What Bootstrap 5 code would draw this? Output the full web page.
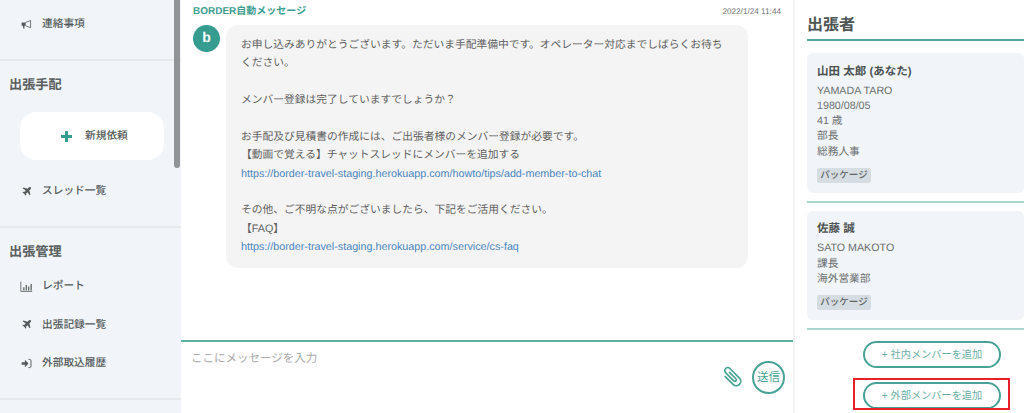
<!DOCTYPE html>
<html lang="ja">
<head>
<meta charset="utf-8">
<title>BORDER</title>
<link href="https://cdn.jsdelivr.net/npm/bootstrap@5.3.0/dist/css/bootstrap.min.css" rel="stylesheet">
<style>
html,body{height:413px;overflow:hidden}
body{font-family:"Liberation Sans","Noto Sans CJK JP",sans-serif;color:#555;background:#fff;font-size:10.7px;text-rendering:geometricPrecision}
.shell{height:413px;width:1024px}
.side{width:181px;flex:none;background:#f1f5f9;position:relative;overflow:hidden}
.thumb{position:absolute;right:1px;top:0;width:6px;height:168px;background:#8f9496;border-radius:0 0 3px 3px}
.sec-a{height:61px;padding-top:5px}
.sec-b{height:167px;padding-top:14px}
.sec-c{height:172px;padding-top:14px}
.side-sec{border-bottom:2px solid #e6eaed}
.side-head{font-size:13.2px;font-weight:700;color:#5a5f5f;margin:0;padding-left:9px;line-height:20px}
.head-gap{margin-bottom:5px}
.side-item{display:flex;align-items:center;height:38.5px;padding-left:20px;color:#555b5b;font-weight:500;font-size:10.7px;text-decoration:none}
.side-item svg{width:13px;height:13px;margin-right:9px;flex:none}
.new-btn{width:144px;height:48px;margin:17px 0 12px 20px;background:#fff;border-radius:16px;display:flex;align-items:center;padding-left:41px;font-size:10.7px;color:#555b5b;font-weight:500;gap:13px}
.chat{width:614px;flex:none;border-right:2px solid #f0f2f4}
.msgs{height:340px;padding:5px 12px 0 12px;flex:none}
.sender{font-size:10px;font-weight:700;color:#3f9e92;line-height:13px}
.stamp{font-size:8.2px;color:#777;line-height:13px}
.msg-row{margin-top:7px}
.avatar{width:27px;height:27px;border-radius:50%;background:#369c90;color:#fff;font-weight:700;font-size:14px;line-height:25px;text-align:center;flex:none}
.bubble{width:522px;height:243px;margin-left:6px;background:#f4f4f4;border-radius:12px;padding:11px 20px 0 15px;font-size:10.76px;line-height:18.36px;color:#5f5f5f;white-space:pre-line}
.bubble a{color:#4a86c0;text-decoration:none}
.composer{border-top:2px solid #5bb0a3;flex:1;padding:9px 10px 0 10px;position:relative}
.hint{font-size:11.5px;color:#a9a9a9;line-height:16px}
.tools{position:absolute;right:8px;top:19px;display:flex;align-items:center;gap:9px}
.send{width:33px;height:33px;border-radius:50%;border:2px solid #48a396;color:#48a396;background:#fff;font-size:11.5px;padding:0;line-height:1;white-space:nowrap}
.right{flex:1;padding:16px 0 0 12px;min-width:0}
.right-title{font-size:16px;font-weight:700;color:#4d5555;line-height:20px;margin:0;padding-bottom:2.5px;border-bottom:2px solid #4fa99c}
.person{background:#f1f5f9;border-radius:6px;padding:8.500px 10px 9.500px;margin:8px 0;line-height:15.3px;color:#6b6f70;font-size:10.7px}
.first{margin-top:12.500px}
.person b{display:block;color:#4d5353;line-height:20px;margin-bottom:2px;font-size:11.5px}
.tag{display:block;width:54px;text-align:center;background:#d6dde2;color:#5d6466;font-size:9.5px;font-weight:500;line-height:15px;border-radius:2px;margin-top:8.300px}
.rule{height:2px;background:#a9d6cf}
.add{display:block;width:138px;height:27px;border:2px solid #48a396;border-radius:14px;background:#fff;color:#6cb0a6;font-size:10.2px;line-height:1;padding:0}
.actions{padding:11.500px 0 0 56px;display:flex;flex-direction:column;gap:14px}
.mark-wrap{position:relative;width:138px}
.mark-box{position:absolute;left:-10px;top:-4px;width:157px;height:32px;border:2px solid #e8202a;pointer-events:none}
</style>
</head>
<body>
<div class="shell d-flex">
  <nav class="side">
    <div class="thumb"></div>
    <div class="side-sec sec-a">
      <a class="side-item" href="#"><svg viewBox="0 0 16 16"><path d="M2 5.500h5v4H5.500V13H4L3.500 9.500H2z" fill="#555b5b"/><path d="M7 5.500 13 3v9L7 9.500" fill="none" stroke="#555b5b"/></svg>連絡事項</a>
    </div>
    <div class="side-sec sec-b">
      <h2 class="side-head">出張手配</h2>
      <div class="new-btn"><svg width="11" height="11" viewBox="0 0 11 11"><path d="M4 0h3v4h4v3H7v4H4V7H0V4h4z" fill="#369c90"/></svg><span>新規依頼</span></div>
      <a class="side-item" href="#"><svg viewBox="0 0 16 16"><path d="M13.200 2.800c-.7-.7-1.800-.4-2.500.3L9.300 4.500 4.200 3.200 3.300 4.100 7 6.800 5.200 8.600 3.600 8.300 2.900 9 5.200 10.800 7 13.100 7.700 12.400 7.400 10.800 9.200 9 11.900 12.700 12.800 11.800 11.500 6.700 12.900 5.300C13.600 4.600 13.900 3.500 13.200 2.800z" fill="#555b5b"/></svg>スレッド一覧</a>
    </div>
    <div class="side-sec sec-c">
      <h2 class="side-head head-gap">出張管理</h2>
      <a class="side-item" href="#"><svg viewBox="0 0 16 16"><path d="M1 2v12h14" fill="none" stroke="#555b5b"/><path d="M4 9h1.500v4H4zM7 6h1.500v7H7zM10 8h1.500v5H10zM13 5h1.500v8H13z" fill="#555b5b"/></svg>レポート</a>
      <a class="side-item" href="#"><svg viewBox="0 0 16 16"><path d="M13.200 2.800c-.7-.7-1.800-.4-2.500.3L9.300 4.500 4.200 3.200 3.300 4.100 7 6.800 5.200 8.600 3.600 8.300 2.900 9 5.200 10.800 7 13.100 7.700 12.400 7.400 10.800 9.200 9 11.900 12.700 12.800 11.800 11.500 6.700 12.900 5.300C13.600 4.600 13.900 3.500 13.200 2.800z" fill="#555b5b"/></svg>出張記録一覧</a>
      <a class="side-item" href="#"><svg viewBox="0 0 16 16"><path d="M2 6.500h4V3.500L10.500 8 6 12.500v-3H2z" fill="#555b5b"/><path d="M10.500 3h1.500c1 0 1.500.7 1.500 1.500v7c0 .8-.5 1.500-1.500 1.500h-1.500" fill="none" stroke="#555b5b" stroke-width="1.200"/></svg>外部取込履歴</a>
    </div>
  </nav>
  <main class="chat d-flex flex-column">
    <div class="msgs">
      <div class="d-flex justify-content-between"><span class="sender">BORDER自動メッセージ</span><span class="stamp">2022/1/24 11:44</span></div>
      <div class="d-flex msg-row">
        <div class="avatar">b</div>
        <div class="bubble">お申し込みありがとうございます。ただいま手配準備中です。オペレーター対応までしばらくお待ちください。

メンバー登録は完了していますでしょうか？

お手配及び見積書の作成には、ご出張者様のメンバー登録が必要です。
【動画で覚える】チャットスレッドにメンバーを追加する
<a href="#">https://border-travel-staging.herokuapp.com/howto/tips/add-member-to-chat</a>

その他、ご不明な点がございましたら、下記をご活用ください。
【FAQ】
<a href="#">https://border-travel-staging.herokuapp.com/service/cs-faq</a></div>
      </div>
    </div>
    <div class="composer">
      <div class="hint">ここにメッセージを入力</div>
      <div class="tools">
        <svg width="22" height="24" viewBox="0 0 22 24"><g transform="translate(11 11) rotate(-45) translate(-6.500 -13)"><path d="M2 8V19a4.500 4.500 0 0 0 9 0V5.500a3 3 0 0 0-6 0V17a1.500 1.500 0 0 0 3 0V8" fill="none" stroke="#48a396" stroke-width="1.700" stroke-linecap="round"/></g></svg>
        <button class="send" type="button">送信</button>
      </div>
    </div>
  </main>
  <aside class="right">
    <h2 class="right-title">出張者</h2>
    <div class="person first"><b>山田 太郎 (あなた)</b>YAMADA TARO<br>1980/08/05<br>41 歳<br>部長<br>総務人事<span class="tag">パッケージ</span></div>
    <div class="rule"></div>
    <div class="person"><b>佐藤 誠</b>SATO MAKOTO<br>課長<br>海外営業部<span class="tag">パッケージ</span></div>
    <div class="rule"></div>
    <div class="actions">
      <button class="add" type="button">+ 社内メンバーを追加</button>
      <div class="mark-wrap">
        <button class="add" type="button">+ 外部メンバーを追加</button>
        <span class="mark-box"></span>
      </div>
    </div>
  </aside>
</div>
</body>
</html>
